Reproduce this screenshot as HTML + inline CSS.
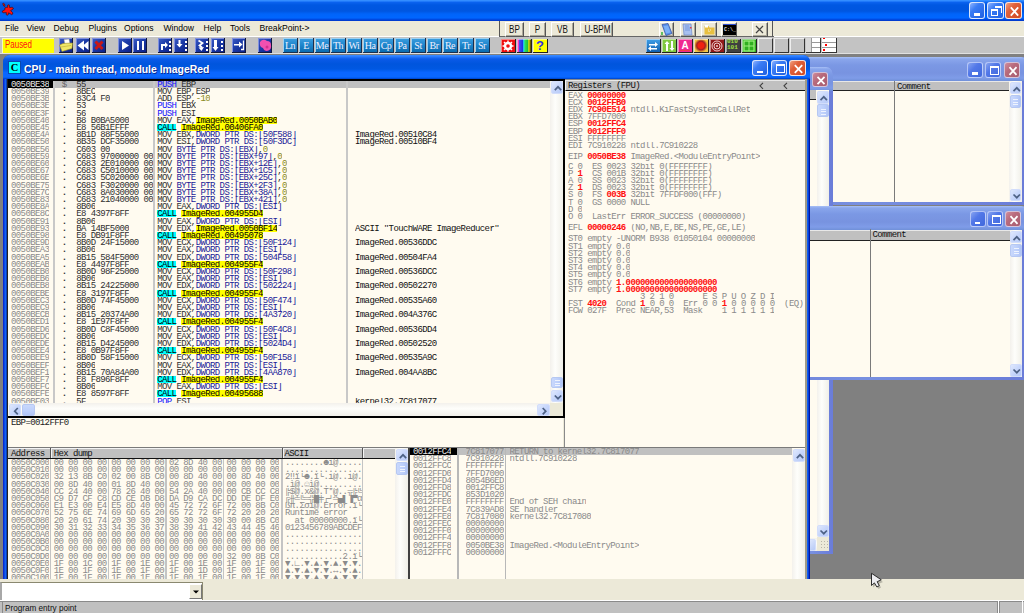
<!DOCTYPE html><html><head><meta charset="utf-8"><style>
*{margin:0;padding:0;box-sizing:border-box}
html,body{width:1024px;height:613px;overflow:hidden;background:#808080}
div{position:absolute}
.t{white-space:pre;line-height:7.2px;font-family:"Liberation Mono",monospace;font-size:9px;letter-spacing:-0.6px;margin-top:1.2px}
.r{position:absolute;white-space:pre;height:8.6px;overflow:hidden;line-height:7.2px;font-family:"Liberation Mono",monospace;font-size:9px;letter-spacing:-0.6px;padding-top:1.2px}
</style></head><body>
<div style="position:absolute;left:0px;top:0px;width:1024px;height:21px;background:linear-gradient(#3c96ff 0px,#2a84ff 1px,#0a62ee 2.5px,#0058e2 5px,#0056e0 11px,#0064fa 14px,#0066ff 18px,#0050e8 19px,#003cd0 20.5px,#0038c8 21px)"></div>
<svg style="position:absolute;left:0;top:0" width="18" height="18" viewBox="0 0 18 18"><g fill="#ff1010" stroke="#300808" stroke-width="0.6" stroke-linejoin="round"><path d="M2.7 3.6 Q3.8 2.8 4.6 4 L5 6.2 Q4.2 6.8 3.6 6 Z"/><path d="M7.6 5.2 Q8.2 4.4 9.3 5 L9.6 7.6 L12.2 7.2 Q13.8 7.8 13.2 9 L10.6 10.6 L12.6 12.6 Q13.3 14.3 11.8 14.8 L8.6 12.8 L8.2 14.8 Q7 15.8 6.2 14.6 L6.4 12.6 L3 12.8 Q1.8 12.2 2.4 11 L5 9.6 L4.8 8 Q6 7 7.6 7.4 Z"/></g></svg>
<div style="position:absolute;left:969px;top:2px;width:16px;height:17px;background:linear-gradient(135deg,#8fb4ff 0%,#3a7cf5 35%,#1f5fe0 100%);border:1px solid rgba(255,255,255,0.82);border-radius:3px;overflow:hidden"><div style="left:4.0px;top:10.2px;width:5.8px;height:2.5px;background:#fff"></div></div>
<div style="position:absolute;left:987px;top:2px;width:17px;height:17px;background:linear-gradient(135deg,#8fb4ff 0%,#3a7cf5 35%,#1f5fe0 100%);border:1px solid rgba(255,255,255,0.82);border-radius:3px;overflow:hidden"><div style="left:7.1px;top:3.1px;width:6.5px;height:6.5px;border-top:2px solid #fff;border-right:1px solid #fff"></div><div style="left:3.4px;top:6.1px;width:6.8px;height:7.1px;border:1px solid #fff;border-top-width:2px"></div></div>
<div style="position:absolute;left:1005px;top:2px;width:17px;height:17px;background:linear-gradient(135deg,#f0a080 0%,#e0603a 35%,#d04a22 100%);border:1px solid rgba(255,255,255,0.82);border-radius:3px;overflow:hidden"><svg style="position:absolute;left:0;top:0" width="17" height="17" viewBox="0 0 17 17"><path d="M4.8 4.4L12.2 12.6M12.2 4.4L4.8 12.6" stroke="#fff" stroke-width="1.8"/></svg></div>
<div style="position:absolute;left:0px;top:21px;width:1024px;height:16px;background:#ece9d8"></div>
<div style="left:5px;top:23.3px;font:8.6px 'Liberation Sans', sans-serif;color:#000;white-space:pre;line-height:10px">File</div>
<div style="left:26.5px;top:23.3px;font:8.6px 'Liberation Sans', sans-serif;color:#000;white-space:pre;line-height:10px">View</div>
<div style="left:53.5px;top:23.3px;font:8.6px 'Liberation Sans', sans-serif;color:#000;white-space:pre;line-height:10px">Debug</div>
<div style="left:88.5px;top:23.3px;font:8.6px 'Liberation Sans', sans-serif;color:#000;white-space:pre;line-height:10px">Plugins</div>
<div style="left:124px;top:23.3px;font:8.6px 'Liberation Sans', sans-serif;color:#000;white-space:pre;line-height:10px">Options</div>
<div style="left:163.5px;top:23.3px;font:8.6px 'Liberation Sans', sans-serif;color:#000;white-space:pre;line-height:10px">Window</div>
<div style="left:203.5px;top:23.3px;font:8.6px 'Liberation Sans', sans-serif;color:#000;white-space:pre;line-height:10px">Help</div>
<div style="left:230px;top:23.3px;font:8.6px 'Liberation Sans', sans-serif;color:#000;white-space:pre;line-height:10px">Tools</div>
<div style="left:259.5px;top:23.3px;font:8.6px 'Liberation Sans', sans-serif;color:#000;white-space:pre;line-height:10px">BreakPoint-&gt;</div>
<div style="position:absolute;left:499px;top:21px;width:275px;height:16px;border-left:1px solid #555;border-bottom:1px solid #666;background:#ece9d8"></div>
<div style="position:absolute;left:505px;top:22px;width:19px;height:15px;background:#ece9d8;border-left:1px solid #fff;border-top:1px solid #fff;border-right:1px solid #555;border-bottom:1px solid #555;box-shadow:inset -1px -1px 0 #aca899"><div style="left:0;top:1px;width:17px;text-align:center;font:10.4px 'Liberation Sans', sans-serif;color:#111;line-height:12px;transform:scaleX(0.78);white-space:pre">BP</div></div>
<div style="position:absolute;left:529px;top:22px;width:17px;height:15px;background:#ece9d8;border-left:1px solid #fff;border-top:1px solid #fff;border-right:1px solid #555;border-bottom:1px solid #555;box-shadow:inset -1px -1px 0 #aca899"><div style="left:0;top:1px;width:15px;text-align:center;font:10.4px 'Liberation Sans', sans-serif;color:#111;line-height:12px;transform:scaleX(0.78);white-space:pre">P</div></div>
<div style="position:absolute;left:551px;top:22px;width:23px;height:15px;background:#ece9d8;border-left:1px solid #fff;border-top:1px solid #fff;border-right:1px solid #555;border-bottom:1px solid #555;box-shadow:inset -1px -1px 0 #aca899"><div style="left:0;top:1px;width:21px;text-align:center;font:10.4px 'Liberation Sans', sans-serif;color:#111;line-height:12px;transform:scaleX(0.78);white-space:pre">VB</div></div>
<div style="position:absolute;left:580px;top:22px;width:33px;height:15px;background:#ece9d8;border-left:1px solid #fff;border-top:1px solid #fff;border-right:1px solid #555;border-bottom:1px solid #555;box-shadow:inset -1px -1px 0 #aca899"><div style="left:0;top:1px;width:31px;text-align:center;font:10.4px 'Liberation Sans', sans-serif;color:#111;line-height:12px;transform:scaleX(0.78);white-space:pre">U-BPM</div></div>
<div style="position:absolute;left:658.5px;top:22px;width:15.5px;height:15px;background:#ece9d8;border-left:1px solid #fff;border-top:1px solid #fff;border-right:1px solid #555;border-bottom:1px solid #555;box-shadow:inset -1px -1px 0 #aca899"></div>
<div style="position:absolute;left:679.5px;top:22px;width:16px;height:15px;background:#ece9d8;border-left:1px solid #fff;border-top:1px solid #fff;border-right:1px solid #555;border-bottom:1px solid #555;box-shadow:inset -1px -1px 0 #aca899"></div>
<div style="position:absolute;left:701px;top:22px;width:16px;height:15px;background:#ece9d8;border-left:1px solid #fff;border-top:1px solid #fff;border-right:1px solid #555;border-bottom:1px solid #555;box-shadow:inset -1px -1px 0 #aca899"></div>
<div style="position:absolute;left:721px;top:22px;width:15.5px;height:15px;background:#ece9d8;border-left:1px solid #fff;border-top:1px solid #fff;border-right:1px solid #555;border-bottom:1px solid #555;box-shadow:inset -1px -1px 0 #aca899"></div>
<svg style="position:absolute;left:660px;top:23px" width="14" height="13"><path d="M2 1.5L8 0.5L12 10.5L6 12.5Z" fill="#5a8ee8" stroke="#3a5aa8" stroke-width="0.8"/><path d="M3.5 3L8 2.5L10.5 9.5L6 10.5Z" fill="#7ab0f8"/><rect x="1" y="9" width="2" height="3" fill="#60c060"/></svg>
<svg style="position:absolute;left:681px;top:23px" width="13" height="13"><path d="M2 1L10 1L11 12L3 12Z" fill="#a8c0f0" stroke="#7890c8" stroke-width="0.8"/><path d="M4 3h4M4 5h5M4 7h5" stroke="#6a90d8" stroke-width="0.8"/><rect x="9" y="4" width="1.5" height="1.5" fill="#e04040"/></svg>
<svg style="position:absolute;left:703px;top:23px" width="13" height="13"><path d="M1.5 3h4l1 1.5h5v7h-10z" fill="#e8c040"/><rect x="2" y="2" width="3" height="2.5" fill="#fff"/><path d="M5 7h1M7 7h1M6 8v1" stroke="#fff" stroke-width="0.8"/></svg>
<div style="position:absolute;left:722.5px;top:23.5px;width:13px;height:11.5px;background:#000;border-top:1.5px solid #3050d0"><div style="left:1.5px;top:2px;font:bold 5px 'Liberation Mono', monospace;color:#ddd;line-height:6px;white-space:pre">C:\_</div></div>
<div style="position:absolute;left:752px;top:22px;width:16px;height:15px;background:#ece9d8;border-left:1px solid #fff;border-top:1px solid #fff;border-right:1px solid #555;border-bottom:1px solid #555;box-shadow:inset -1px -1px 0 #aca899"></div>
<svg style="position:absolute;left:752px;top:22px" width="16" height="15"><path d="M4 4L11 11M11 4L4 11" stroke="#444" stroke-width="1.2"/></svg>
<div style="position:absolute;left:772px;top:21px;width:1px;height:16px;background:#555"></div>
<div style="position:absolute;left:0px;top:37px;width:1024px;height:17px;background:#c3c3c3"></div>
<div style="position:absolute;left:0px;top:36px;width:499px;height:1px;background:#fff"></div>
<div style="position:absolute;left:774px;top:36px;width:250px;height:1px;background:#fff"></div>
<div style="position:absolute;left:0px;top:53px;width:1024px;height:1px;background:#e0e0e0"></div>
<div style="position:absolute;left:1.5px;top:37.5px;width:52.5px;height:15.5px;background:#ffff00;border-top:1px solid #f8f8c0;border-left:1px solid #f8f8c0"></div>
<div style="left:4.5px;top:39.4px;font:10.2px 'Liberation Sans', sans-serif;color:#ff1010;line-height:12px;white-space:pre;transform:scaleX(0.78);transform-origin:0 0">Paused</div>
<div style="position:absolute;left:59px;top:38.3px;width:14px;height:14.5px;background:linear-gradient(135deg,#4060c8 0%,#1c3ca8 45%,#0c2088 100%);border-right:1px solid #101840;border-bottom:1px solid #101840;box-shadow:inset 1px 1px 0 #8090e0"><svg style="position:absolute;left:0;top:0" width="15" height="15"><path d="M5 1.5 L10 1 L11 6 L6 7 Z" fill="#fff" stroke="#999" stroke-width="0.5"/><path d="M0.5 7 L4 5.5 L13.5 5 L13 10.5 L3 13.5 Z" fill="#f0e868" stroke="#a09020" stroke-width="0.6"/><path d="M2 9 L12 7.5" stroke="#c8b840" stroke-width="0.8"/></svg></div>
<div style="position:absolute;left:75.5px;top:38.3px;width:14px;height:14.5px;background:linear-gradient(135deg,#4060c8 0%,#1c3ca8 45%,#0c2088 100%);border-right:1px solid #101840;border-bottom:1px solid #101840;box-shadow:inset 1px 1px 0 #8090e0"><svg style="position:absolute;left:0;top:0" width="15" height="15"><path d="M1.5 7.5L8 2.5V12.5Z M7 7.5L12.5 3V12Z" fill="#fff"/></svg></div>
<div style="position:absolute;left:91.5px;top:38.3px;width:14px;height:14.5px;background:linear-gradient(135deg,#4060c8 0%,#1c3ca8 45%,#0c2088 100%);border-right:1px solid #101840;border-bottom:1px solid #101840;box-shadow:inset 1px 1px 0 #8090e0"><svg style="position:absolute;left:0;top:0" width="15" height="15"><path d="M3.5 3.5L10.5 11M10.5 3.5L3.5 11" stroke="#c81818" stroke-width="3"/></svg></div>
<div style="position:absolute;left:117.5px;top:38.3px;width:14px;height:14.5px;background:linear-gradient(135deg,#4060c8 0%,#1c3ca8 45%,#0c2088 100%);border-right:1px solid #101840;border-bottom:1px solid #101840;box-shadow:inset 1px 1px 0 #8090e0"><svg style="position:absolute;left:0;top:0" width="15" height="15"><path d="M4 3L11 7.5L4 12Z" fill="#fff"/></svg></div>
<div style="position:absolute;left:133px;top:38.3px;width:14px;height:14.5px;background:linear-gradient(135deg,#4060c8 0%,#1c3ca8 45%,#0c2088 100%);border-right:1px solid #101840;border-bottom:1px solid #101840;box-shadow:inset 1px 1px 0 #8090e0"><svg style="position:absolute;left:0;top:0" width="15" height="15"><rect x="4" y="3" width="2" height="9" fill="#fff"/><rect x="9" y="3" width="2" height="9" fill="#fff"/></svg></div>
<div style="position:absolute;left:158px;top:38.3px;width:14px;height:14.5px;background:linear-gradient(135deg,#4060c8 0%,#1c3ca8 45%,#0c2088 100%);border-right:1px solid #101840;border-bottom:1px solid #101840;box-shadow:inset 1px 1px 0 #8090e0"><svg style="position:absolute;left:0;top:0" width="15" height="15"><path d="M3 12V6h4V4l3 3-3 3V8H5v4z" fill="#fff"/><rect x="11" y="3" width="2" height="2" fill="#fff"/><rect x="11" y="7" width="2" height="2" fill="#fff"/><rect x="11" y="11" width="2" height="2" fill="#fff"/></svg></div>
<div style="position:absolute;left:174px;top:38.3px;width:14px;height:14.5px;background:linear-gradient(135deg,#4060c8 0%,#1c3ca8 45%,#0c2088 100%);border-right:1px solid #101840;border-bottom:1px solid #101840;box-shadow:inset 1px 1px 0 #8090e0"><svg style="position:absolute;left:0;top:0" width="15" height="15"><path d="M4.5 2v4H2.5l3 3.5 3-3.5H6.5V2z" fill="#fff"/><rect x="11" y="3" width="2" height="2" fill="#fff"/><rect x="11" y="7" width="2" height="2" fill="#fff"/><rect x="11" y="11" width="2" height="2" fill="#fff"/></svg></div>
<div style="position:absolute;left:195px;top:38.3px;width:14px;height:14.5px;background:linear-gradient(135deg,#4060c8 0%,#1c3ca8 45%,#0c2088 100%);border-right:1px solid #101840;border-bottom:1px solid #101840;box-shadow:inset 1px 1px 0 #8090e0"><svg style="position:absolute;left:0;top:0" width="15" height="15"><path d="M3.5 2.5L7.5 5L4.5 7.5L7 9.5" stroke="#fff" stroke-width="1.8" fill="none" stroke-linejoin="miter"/><path d="M3.5 9.5L6.5 13L9 9Z" fill="#fff"/><rect x="11" y="3" width="2" height="2" fill="#fff"/><rect x="11" y="7" width="2" height="2" fill="#fff"/><rect x="11" y="11" width="2" height="2" fill="#fff"/></svg></div>
<div style="position:absolute;left:211px;top:38.3px;width:14px;height:14.5px;background:linear-gradient(135deg,#4060c8 0%,#1c3ca8 45%,#0c2088 100%);border-right:1px solid #101840;border-bottom:1px solid #101840;box-shadow:inset 1px 1px 0 #8090e0"><svg style="position:absolute;left:0;top:0" width="15" height="15"><path d="M3 2v7H1.5l3 4 3-4H6V2z" fill="#fff"/><rect x="10" y="3" width="2" height="2" fill="#fff"/><rect x="10" y="7" width="2" height="2" fill="#fff"/><rect x="10" y="11" width="2" height="2" fill="#fff"/></svg></div>
<div style="position:absolute;left:232px;top:38.3px;width:14px;height:14.5px;background:linear-gradient(135deg,#4060c8 0%,#1c3ca8 45%,#0c2088 100%);border-right:1px solid #101840;border-bottom:1px solid #101840;box-shadow:inset 1px 1px 0 #8090e0"><svg style="position:absolute;left:0;top:0" width="15" height="15"><path d="M2 6h5V3.5l3.5 3-3.5 3V7.5H2z" fill="#fff"/><path d="M11.5 2.5V11.5H9" stroke="#fff" stroke-width="1.3" fill="none"/></svg></div>
<div style="position:absolute;left:257.5px;top:38.3px;width:14px;height:14.5px;background:linear-gradient(135deg,#4060c8 0%,#1c3ca8 45%,#0c2088 100%);border-right:1px solid #101840;border-bottom:1px solid #101840;box-shadow:inset 1px 1px 0 #8090e0"><svg style="position:absolute;left:0;top:0" width="15" height="15"><path d="M2 4 Q5 0 9 3 Q13 3 13 7 Q14 12 9 13 Q6 13 5 10 Q1 9 2 4Z" fill="#f050b0"/><circle cx="9" cy="9" r="1.5" fill="#d03090"/></svg></div>
<div style="position:absolute;left:283px;top:38px;width:15px;height:15px;background:linear-gradient(#3c9ee0 0%,#1f86cc 50%,#0c6cb0 100%);border-right:1px solid #1a3050;border-bottom:1px solid #1a3050;box-shadow:inset 1px 1px 0 #9fd0f0"><div style="left:0;top:1.5px;width:14px;text-align:center;font:10px 'Liberation Serif',serif;color:#f0f0ff;line-height:12px;white-space:pre;letter-spacing:-0.5px;-webkit-text-stroke:0px #f0f0ff">Ln</div></div>
<div style="position:absolute;left:299px;top:38px;width:15px;height:15px;background:linear-gradient(#3c9ee0 0%,#1f86cc 50%,#0c6cb0 100%);border-right:1px solid #1a3050;border-bottom:1px solid #1a3050;box-shadow:inset 1px 1px 0 #9fd0f0"><div style="left:0;top:1.5px;width:14px;text-align:center;font:10px 'Liberation Serif',serif;color:#f0f0ff;line-height:12px;white-space:pre;letter-spacing:-0.5px;-webkit-text-stroke:0px #f0f0ff">E</div></div>
<div style="position:absolute;left:315px;top:38px;width:15px;height:15px;background:linear-gradient(#3c9ee0 0%,#1f86cc 50%,#0c6cb0 100%);border-right:1px solid #1a3050;border-bottom:1px solid #1a3050;box-shadow:inset 1px 1px 0 #9fd0f0"><div style="left:0;top:1.5px;width:14px;text-align:center;font:10px 'Liberation Serif',serif;color:#f0f0ff;line-height:12px;white-space:pre;letter-spacing:-0.5px;-webkit-text-stroke:0px #f0f0ff">Me</div></div>
<div style="position:absolute;left:331px;top:38px;width:15px;height:15px;background:linear-gradient(#3c9ee0 0%,#1f86cc 50%,#0c6cb0 100%);border-right:1px solid #1a3050;border-bottom:1px solid #1a3050;box-shadow:inset 1px 1px 0 #9fd0f0"><div style="left:0;top:1.5px;width:14px;text-align:center;font:10px 'Liberation Serif',serif;color:#f0f0ff;line-height:12px;white-space:pre;letter-spacing:-0.5px;-webkit-text-stroke:0px #f0f0ff">Th</div></div>
<div style="position:absolute;left:347px;top:38px;width:15px;height:15px;background:linear-gradient(#3c9ee0 0%,#1f86cc 50%,#0c6cb0 100%);border-right:1px solid #1a3050;border-bottom:1px solid #1a3050;box-shadow:inset 1px 1px 0 #9fd0f0"><div style="left:0;top:1.5px;width:14px;text-align:center;font:10px 'Liberation Serif',serif;color:#f0f0ff;line-height:12px;white-space:pre;letter-spacing:-0.5px;-webkit-text-stroke:0px #f0f0ff">Wi</div></div>
<div style="position:absolute;left:363px;top:38px;width:15px;height:15px;background:linear-gradient(#3c9ee0 0%,#1f86cc 50%,#0c6cb0 100%);border-right:1px solid #1a3050;border-bottom:1px solid #1a3050;box-shadow:inset 1px 1px 0 #9fd0f0"><div style="left:0;top:1.5px;width:14px;text-align:center;font:10px 'Liberation Serif',serif;color:#f0f0ff;line-height:12px;white-space:pre;letter-spacing:-0.5px;-webkit-text-stroke:0px #f0f0ff">Ha</div></div>
<div style="position:absolute;left:379px;top:38px;width:15px;height:15px;background:linear-gradient(#3c9ee0 0%,#1f86cc 50%,#0c6cb0 100%);border-right:1px solid #1a3050;border-bottom:1px solid #1a3050;box-shadow:inset 1px 1px 0 #9fd0f0"><div style="left:0;top:1.5px;width:14px;text-align:center;font:10px 'Liberation Serif',serif;color:#f0f0ff;line-height:12px;white-space:pre;letter-spacing:-0.5px;-webkit-text-stroke:0px #f0f0ff">Cp</div></div>
<div style="position:absolute;left:395px;top:38px;width:15px;height:15px;background:linear-gradient(#3c9ee0 0%,#1f86cc 50%,#0c6cb0 100%);border-right:1px solid #1a3050;border-bottom:1px solid #1a3050;box-shadow:inset 1px 1px 0 #9fd0f0"><div style="left:0;top:1.5px;width:14px;text-align:center;font:10px 'Liberation Serif',serif;color:#f0f0ff;line-height:12px;white-space:pre;letter-spacing:-0.5px;-webkit-text-stroke:0px #f0f0ff">Pa</div></div>
<div style="position:absolute;left:411px;top:38px;width:15px;height:15px;background:linear-gradient(#3c9ee0 0%,#1f86cc 50%,#0c6cb0 100%);border-right:1px solid #1a3050;border-bottom:1px solid #1a3050;box-shadow:inset 1px 1px 0 #9fd0f0"><div style="left:0;top:1.5px;width:14px;text-align:center;font:10px 'Liberation Serif',serif;color:#f0f0ff;line-height:12px;white-space:pre;letter-spacing:-0.5px;-webkit-text-stroke:0px #f0f0ff">St</div></div>
<div style="position:absolute;left:427px;top:38px;width:15px;height:15px;background:linear-gradient(#3c9ee0 0%,#1f86cc 50%,#0c6cb0 100%);border-right:1px solid #1a3050;border-bottom:1px solid #1a3050;box-shadow:inset 1px 1px 0 #9fd0f0"><div style="left:0;top:1.5px;width:14px;text-align:center;font:10px 'Liberation Serif',serif;color:#f0f0ff;line-height:12px;white-space:pre;letter-spacing:-0.5px;-webkit-text-stroke:0px #f0f0ff">Br</div></div>
<div style="position:absolute;left:443px;top:38px;width:15px;height:15px;background:linear-gradient(#3c9ee0 0%,#1f86cc 50%,#0c6cb0 100%);border-right:1px solid #1a3050;border-bottom:1px solid #1a3050;box-shadow:inset 1px 1px 0 #9fd0f0"><div style="left:0;top:1.5px;width:14px;text-align:center;font:10px 'Liberation Serif',serif;color:#f0f0ff;line-height:12px;white-space:pre;letter-spacing:-0.5px;-webkit-text-stroke:0px #f0f0ff">Re</div></div>
<div style="position:absolute;left:459px;top:38px;width:15px;height:15px;background:linear-gradient(#3c9ee0 0%,#1f86cc 50%,#0c6cb0 100%);border-right:1px solid #1a3050;border-bottom:1px solid #1a3050;box-shadow:inset 1px 1px 0 #9fd0f0"><div style="left:0;top:1.5px;width:14px;text-align:center;font:10px 'Liberation Serif',serif;color:#f0f0ff;line-height:12px;white-space:pre;letter-spacing:-0.5px;-webkit-text-stroke:0px #f0f0ff">Tr</div></div>
<div style="position:absolute;left:475px;top:38px;width:15px;height:15px;background:linear-gradient(#3c9ee0 0%,#1f86cc 50%,#0c6cb0 100%);border-right:1px solid #1a3050;border-bottom:1px solid #1a3050;box-shadow:inset 1px 1px 0 #9fd0f0"><div style="left:0;top:1.5px;width:14px;text-align:center;font:10px 'Liberation Serif',serif;color:#f0f0ff;line-height:12px;white-space:pre;letter-spacing:-0.5px;-webkit-text-stroke:0px #f0f0ff">Sr</div></div>
<div style="position:absolute;left:501px;top:38.5px;width:14.5px;height:14.5px;background:#f01010;border-right:1px solid #222;border-bottom:1px solid #222;box-shadow:inset 1px 1px 0 rgba(255,255,255,0.5)"><svg style="position:absolute;left:0;top:0" width="14" height="14"><circle cx="7" cy="7" r="4.2" fill="#fff"/><circle cx="7" cy="7" r="1.8" fill="#f01010"/><path d="M7 1.5v11M1.5 7h11M3 3l8 8M11 3l-8 8" stroke="#fff" stroke-width="1.4"/><circle cx="7" cy="7" r="1.8" fill="#f01010"/></svg></div>
<div style="position:absolute;left:517px;top:38.5px;width:14.5px;height:14.5px;background:linear-gradient(90deg,#f040c0 0%,#f040c0 12%,#4050f0 18%,#2030e0 40%,#20e0f0 48%,#30e050 58%,#20c040 75%,#f0e000 85%,#403000 100%);border-right:1px solid #222;border-bottom:1px solid #222;box-shadow:inset 1px 1px 0 rgba(255,255,255,0.5)"></div>
<div style="position:absolute;left:533px;top:38.5px;width:14.5px;height:14.5px;background:#ffff00;border-right:1px solid #222;border-bottom:1px solid #222;box-shadow:inset 1px 1px 0 rgba(255,255,255,0.5)"><div style="left:1px;top:-1px;width:12px;text-align:center;font:bold 13px 'Liberation Sans', sans-serif;color:#3030e0;line-height:15px">?</div></div>
<div style="position:absolute;left:646px;top:38.5px;width:14.5px;height:14.5px;background:linear-gradient(#40a0e8,#1060b0);border-right:1px solid #222;border-bottom:1px solid #222;box-shadow:inset 1px 1px 0 rgba(255,255,255,0.5)"><svg style="position:absolute;left:0;top:0" width="14" height="14"><path d="M3 5h6V3l3 2.5-3 2.5V6.5H3z M11 9H5V7L2 9.5 5 12v-1.5h6z" fill="#fff"/></svg></div>
<div style="position:absolute;left:662px;top:38.5px;width:14.5px;height:14.5px;background:#80c840;border-right:1px solid #222;border-bottom:1px solid #222;box-shadow:inset 1px 1px 0 rgba(255,255,255,0.5)"><svg style="position:absolute;left:0;top:0" width="14" height="14"><path d="M4 12V5H2.5L5 2l2.5 3H6v7z M9 2v7H7.5l2.5 3 2.5-3H11V2z" fill="#fff"/></svg></div>
<div style="position:absolute;left:678px;top:38.5px;width:14.5px;height:14.5px;background:#f02890;border-right:1px solid #222;border-bottom:1px solid #222;box-shadow:inset 1px 1px 0 rgba(255,255,255,0.5)"><div style="left:0;top:1px;width:14px;text-align:center;font:bold 10px 'Liberation Sans', sans-serif;color:#fff;line-height:12px">A</div><div style="left:2px;top:11px;width:10px;height:1px;background:#f04040"></div></div>
<div style="position:absolute;left:694px;top:38.5px;width:14.5px;height:14.5px;background:radial-gradient(circle,#f02010 0%,#f02010 30%,#a02020 45%,#f0c040 70%,#f0d050 100%);border-right:1px solid #222;border-bottom:1px solid #222;box-shadow:inset 1px 1px 0 rgba(255,255,255,0.5)"></div>
<div style="position:absolute;left:710px;top:38.5px;width:14.5px;height:14.5px;background:#901818;border-right:1px solid #222;border-bottom:1px solid #222;box-shadow:inset 1px 1px 0 rgba(255,255,255,0.5)"><svg style="position:absolute;left:0;top:0" width="14" height="14"><circle cx="7" cy="7" r="5" fill="none" stroke="#f0d0d0" stroke-width="1"/><circle cx="7" cy="7" r="3" fill="none" stroke="#f0d0d0" stroke-width="1"/><circle cx="7" cy="7" r="1" fill="#f0d0d0"/></svg></div>
<div style="position:absolute;left:726px;top:38.5px;width:14.5px;height:14.5px;background:#404040;border-right:1px solid #222;border-bottom:1px solid #222;box-shadow:inset 1px 1px 0 rgba(255,255,255,0.5)"><div style="left:1px;top:0px;font:bold 6px 'Liberation Mono', monospace;color:#a0e040;line-height:6px;white-space:pre">010
101</div></div>
<div style="position:absolute;left:742px;top:38.5px;width:14.5px;height:14.5px;background:#30b020;border-right:1px solid #222;border-bottom:1px solid #222;box-shadow:inset 1px 1px 0 rgba(255,255,255,0.5)"><svg style="position:absolute;left:0;top:0" width="14" height="14"><rect x="2" y="2" width="10" height="10" fill="none" stroke="#a0f080" stroke-width="1.2"/><path d="M7 2v10M2 7h10" stroke="#a0f080"/></svg></div>
<div style="position:absolute;left:758px;top:38px;width:15px;height:15px;background:#c3c3c3;border-left:1px solid #eee;border-top:1px solid #eee;border-right:1px solid #333;border-bottom:1px solid #333"></div>
<div style="position:absolute;left:774px;top:38px;width:15px;height:15px;background:#c3c3c3;border-left:1px solid #eee;border-top:1px solid #eee;border-right:1px solid #333;border-bottom:1px solid #333"></div>
<div style="position:absolute;left:790px;top:38px;width:15px;height:15px;background:#c3c3c3;border-left:1px solid #eee;border-top:1px solid #eee;border-right:1px solid #333;border-bottom:1px solid #333"></div>
<div style="position:absolute;left:806px;top:38px;width:15px;height:15px;background:#fff;border-right:1px solid #333;border-bottom:1px solid #333"><div style="left:0;top:0;width:5px;height:14px;background:#d8d8d8"></div><div style="left:5px;top:4px;width:9px;height:1px;background:#999"></div><div style="left:5px;top:9px;width:9px;height:1px;background:#999"></div><div style="left:5px;top:0;width:1px;height:14px;background:#999"></div></div>
<div style="position:absolute;left:822px;top:38px;width:15px;height:15px;background:#fff;border-right:1px solid #333;border-bottom:1px solid #333"><div style="left:0;top:4px;width:14px;height:1px;background:#999"></div><div style="left:0;top:9px;width:14px;height:1px;background:#999"></div><div style="left:1px;top:0;width:2px;height:1px;background:#f00"></div><div style="left:3px;top:6px;width:2px;height:2px;background:#f00"></div><div style="left:1px;top:11px;width:2px;height:2px;background:#f00"></div></div>
<div style="position:absolute;left:0px;top:54px;width:1024px;height:525px;background:#808080"></div>
<div style="position:absolute;left:700px;top:56.5px;width:328px;height:148.5px;background:linear-gradient(90deg,#6a7cd8,#7890e0 50%,#6a7cd8);border-radius:7px 7px 0 0;overflow:hidden"><div style="left:0;top:0;width:328px;height:24px;background:linear-gradient(#a8c0f6 0px,#8aa6ec 2px,#7b98e4 8px,#7893e0 16px,#7f9ce8 21px,#7090d8 24px)"></div></div>
<div style="position:absolute;left:704px;top:81px;width:317.5px;height:120.5px;background:#fffbf0"></div>
<div style="position:absolute;left:704px;top:81px;width:305px;height:10px;background:#c0c0c0;border-bottom:1px solid #222;border-top:1px solid #e8e8e8"></div>
<div style="position:absolute;left:894px;top:81px;width:1px;height:120.5px;background:#7a7a7a"></div>
<div class="t" style="left:897px;top:82.5px;color:#111;">Comment</div>
<div style="position:absolute;left:1009px;top:81px;width:12.5px;height:120.5px;background:linear-gradient(90deg,#f3f1ec 0%,#fefefb 40%,#f0efe8 100%);overflow:hidden"><div style="left:0.5px;top:0.5px;width:11.5px;height:12.5px;background:linear-gradient(135deg,#dfe8fd 0%,#c7d6fb 50%,#b7caf7 100%);border:1px solid #d2ddfb;border-radius:2px"><svg style="position:absolute;left:0;top:0" width="11.5" height="12.5"><path d="M2.5 8.1L5.8 4.8L8.9 8.1" stroke="#4d6185" stroke-width="1.7" fill="none"/></svg></div><div style="left:0.5px;top:107.5px;width:11.5px;height:12.5px;background:linear-gradient(135deg,#dfe8fd 0%,#c7d6fb 50%,#b7caf7 100%);border:1px solid #d2ddfb;border-radius:2px"><svg style="position:absolute;left:0;top:0" width="11.5" height="12.5"><path d="M2.5 4.5L5.8 7.7L8.9 4.5" stroke="#4d6185" stroke-width="1.7" fill="none"/></svg></div><div style="left:0.5px;top:13.5px;width:11.5px;height:13px;background:linear-gradient(90deg,#c9d8fc,#bccffb 60%,#b0c4f5);border:1px solid #b6c8f2;border-radius:2px"><div style="left:2.8px;top:3.5px;width:5px;height:6px;border-top:1px solid #eef3fe;border-bottom:1px solid #eef3fe;"><div style="left:0;top:1.5px;width:5px;height:1px;background:#eef3fe"></div></div></div></div>
<div style="position:absolute;left:967px;top:61.5px;width:16px;height:16px;background:linear-gradient(135deg,#88a4f0 0%,#5278e8 40%,#4068dc 100%);border:1px solid rgba(225,232,255,0.7);border-radius:3px;overflow:hidden"><div style="left:4.0px;top:9.6px;width:5.8px;height:2.5px;background:#fff"></div></div>
<div style="position:absolute;left:985px;top:61.5px;width:16px;height:16px;background:linear-gradient(135deg,#88a4f0 0%,#5278e8 40%,#4068dc 100%);border:1px solid rgba(225,232,255,0.7);border-radius:3px;overflow:hidden"><div style="left:3.5px;top:3.2px;width:9.0px;height:9.0px;border:1px solid #fff;border-top-width:2px"></div></div>
<div style="position:absolute;left:1003.5px;top:61.5px;width:16px;height:16px;background:linear-gradient(135deg,#d08c9c 0%,#b86a7c 40%,#a85c70 100%);border:1px solid rgba(225,232,255,0.7);border-radius:3px;overflow:hidden"><svg style="position:absolute;left:0;top:0" width="16" height="16" viewBox="0 0 16 16"><path d="M4.5 4.2L11.5 11.8M11.5 4.2L4.5 11.8" stroke="#fff" stroke-width="1.8"/></svg></div>
<div style="position:absolute;left:790px;top:66.5px;width:43px;height:487.5px;background:linear-gradient(90deg,#6a7cd8,#7890e0 50%,#6a7cd8);border-radius:7px 7px 0 0;overflow:hidden"><div style="left:0;top:0;width:43px;height:24px;background:linear-gradient(#a8c0f6 0px,#8aa6ec 2px,#7b98e4 8px,#7893e0 16px,#7f9ce8 21px,#7090d8 24px)"></div></div>
<div style="position:absolute;left:794px;top:90px;width:35px;height:461px;background:#fffbf0"></div>
<div style="position:absolute;left:794px;top:90px;width:22px;height:10px;background:#c0c0c0;border-bottom:1px solid #222"></div>
<div style="position:absolute;left:816.5px;top:90.5px;width:12.5px;height:447px;background:linear-gradient(90deg,#f3f1ec 0%,#fefefb 40%,#f0efe8 100%);overflow:hidden"><div style="left:0.5px;top:0.5px;width:11.5px;height:12.5px;background:linear-gradient(135deg,#dfe8fd 0%,#c7d6fb 50%,#b7caf7 100%);border:1px solid #d2ddfb;border-radius:2px"><svg style="position:absolute;left:0;top:0" width="11.5" height="12.5"><path d="M2.5 8.1L5.8 4.8L8.9 8.1" stroke="#4d6185" stroke-width="1.7" fill="none"/></svg></div><div style="left:0.5px;top:434.0px;width:11.5px;height:12.5px;background:linear-gradient(135deg,#dfe8fd 0%,#c7d6fb 50%,#b7caf7 100%);border:1px solid #d2ddfb;border-radius:2px"><svg style="position:absolute;left:0;top:0" width="11.5" height="12.5"><path d="M2.5 4.5L5.8 7.7L8.9 4.5" stroke="#4d6185" stroke-width="1.7" fill="none"/></svg></div><div style="left:0.5px;top:13.5px;width:11.5px;height:13px;background:linear-gradient(90deg,#c9d8fc,#bccffb 60%,#b0c4f5);border:1px solid #b6c8f2;border-radius:2px"><div style="left:2.8px;top:3.5px;width:5px;height:6px;border-top:1px solid #eef3fe;border-bottom:1px solid #eef3fe;"><div style="left:0;top:1.5px;width:5px;height:1px;background:#eef3fe"></div></div></div></div>
<div style="position:absolute;left:816.5px;top:537px;width:12.5px;height:14px;background:#ece9d8"><div style="left:3px;top:3px;width:8px;height:8px;background:radial-gradient(circle,#b8b4a8 0.8px,transparent 1px) 0 0/3px 3px"></div></div>
<div style="position:absolute;left:794px;top:538px;width:22.5px;height:13px;background:linear-gradient(#f3f1ec,#fefefb 40%,#f0efe8)"><div style="left:14px;top:0.5px;width:8px;height:12px;background:linear-gradient(135deg,#dfe8fd,#b7caf7);border:1px solid #d2ddfb;border-radius:2px"></div></div>
<div style="position:absolute;left:812px;top:72px;width:16px;height:15px;background:linear-gradient(135deg,#d08c9c 0%,#b86a7c 40%,#a85c70 100%);border:1px solid rgba(225,232,255,0.7);border-radius:3px;overflow:hidden"><svg style="position:absolute;left:0;top:0" width="16" height="15" viewBox="0 0 16 15"><path d="M4.5 3.9L11.5 11.1M11.5 3.9L4.5 11.1" stroke="#fff" stroke-width="1.8"/></svg></div>
<div style="position:absolute;left:700px;top:205.5px;width:328px;height:174px;background:linear-gradient(90deg,#6a7cd8,#7890e0 50%,#6a7cd8);border-radius:7px 7px 0 0;overflow:hidden"><div style="left:0;top:0;width:328px;height:24px;background:linear-gradient(#a8c0f6 0px,#8aa6ec 2px,#7b98e4 8px,#7893e0 16px,#7f9ce8 21px,#7090d8 24px)"></div></div>
<div style="position:absolute;left:704px;top:229.5px;width:317.5px;height:147.5px;background:#fffbf0"></div>
<div style="position:absolute;left:704px;top:229.5px;width:306px;height:11px;background:#c0c0c0;border-bottom:1px solid #222;border-top:1px solid #e8e8e8"></div>
<div style="position:absolute;left:869.5px;top:229px;width:1px;height:148px;background:#7a7a7a"></div>
<div class="t" style="left:872.5px;top:230.5px;color:#111;">Comment</div>
<div style="position:absolute;left:1009.5px;top:230px;width:12.5px;height:147px;background:linear-gradient(90deg,#f3f1ec 0%,#fefefb 40%,#f0efe8 100%);overflow:hidden"><div style="left:0.5px;top:0.5px;width:11.5px;height:12.5px;background:linear-gradient(135deg,#dfe8fd 0%,#c7d6fb 50%,#b7caf7 100%);border:1px solid #d2ddfb;border-radius:2px"><svg style="position:absolute;left:0;top:0" width="11.5" height="12.5"><path d="M2.5 8.1L5.8 4.8L8.9 8.1" stroke="#4d6185" stroke-width="1.7" fill="none"/></svg></div><div style="left:0.5px;top:134.0px;width:11.5px;height:12.5px;background:linear-gradient(135deg,#dfe8fd 0%,#c7d6fb 50%,#b7caf7 100%);border:1px solid #d2ddfb;border-radius:2px"><svg style="position:absolute;left:0;top:0" width="11.5" height="12.5"><path d="M2.5 4.5L5.8 7.7L8.9 4.5" stroke="#4d6185" stroke-width="1.7" fill="none"/></svg></div><div style="left:0.5px;top:13.5px;width:11.5px;height:13px;background:linear-gradient(90deg,#c9d8fc,#bccffb 60%,#b0c4f5);border:1px solid #b6c8f2;border-radius:2px"><div style="left:2.8px;top:3.5px;width:5px;height:6px;border-top:1px solid #eef3fe;border-bottom:1px solid #eef3fe;"><div style="left:0;top:1.5px;width:5px;height:1px;background:#eef3fe"></div></div></div></div>
<div style="position:absolute;left:969.5px;top:211px;width:16px;height:16px;background:linear-gradient(135deg,#88a4f0 0%,#5278e8 40%,#4068dc 100%);border:1px solid rgba(225,232,255,0.7);border-radius:3px;overflow:hidden"><div style="left:4.0px;top:9.6px;width:5.8px;height:2.5px;background:#fff"></div></div>
<div style="position:absolute;left:987px;top:211px;width:16px;height:16px;background:linear-gradient(135deg,#88a4f0 0%,#5278e8 40%,#4068dc 100%);border:1px solid rgba(225,232,255,0.7);border-radius:3px;overflow:hidden"><div style="left:3.5px;top:3.2px;width:9.0px;height:9.0px;border:1px solid #fff;border-top-width:2px"></div></div>
<div style="position:absolute;left:1005px;top:211px;width:16px;height:16px;background:linear-gradient(135deg,#d08c9c 0%,#b86a7c 40%,#a85c70 100%);border:1px solid rgba(225,232,255,0.7);border-radius:3px;overflow:hidden"><svg style="position:absolute;left:0;top:0" width="16" height="16" viewBox="0 0 16 16"><path d="M4.5 4.2L11.5 11.8M11.5 4.2L4.5 11.8" stroke="#fff" stroke-width="1.8"/></svg></div>
<div style="position:absolute;left:3px;top:55px;width:807px;height:540px;background:linear-gradient(90deg,#0040d8,#0a5cf2 50%,#0040d8);border-radius:7px 7px 0 0;overflow:hidden"><div style="left:0;top:0;width:807px;height:24px;background:linear-gradient(#3a8cff 0px,#2a7cff 1.5px,#0a5ae8 4px,#0055dd 9px,#0058e2 14px,#0a66ff 17.5px,#0a68ff 22px,#0058ee 23px,#0040c0 24px)"></div></div>
<div style="position:absolute;left:7px;top:79px;width:799px;height:500px;background:#ece9d8"></div>
<div style="position:absolute;left:3px;top:79px;width:4px;height:500px;background:linear-gradient(90deg,#0818c8 0%,#0a48e0 35%,#1464f8 65%,#0a2a90 100%)"></div>
<div style="position:absolute;left:806.5px;top:79px;width:3.5px;height:500px;background:linear-gradient(90deg,#1464f8 0%,#0a50e8 40%,#0018a8 75%,#0010a0 100%)"></div>
<div style="position:absolute;left:8px;top:61px;width:12.5px;height:13px;background:#00ffff;border:1px solid #0a4ab0"><div style="left:0;top:0px;width:11px;text-align:center;font:bold 10.5px 'Liberation Serif',serif;color:#000;line-height:12px">C</div></div>
<div style="left:24px;top:62.5px;font:bold 10.4px 'Liberation Sans', sans-serif;color:#fff;line-height:14px;white-space:pre;text-shadow:1px 1px 0 #0a2a90">CPU - main thread, module ImageRed</div>
<div style="position:absolute;left:752px;top:60px;width:16px;height:16px;background:linear-gradient(135deg,#8fb4ff 0%,#3a7cf5 35%,#1f5fe0 100%);border:1px solid rgba(255,255,255,0.82);border-radius:3px;overflow:hidden"><div style="left:4.0px;top:9.6px;width:5.8px;height:2.5px;background:#fff"></div></div>
<div style="position:absolute;left:771px;top:60px;width:16px;height:16px;background:linear-gradient(135deg,#8fb4ff 0%,#3a7cf5 35%,#1f5fe0 100%);border:1px solid rgba(255,255,255,0.82);border-radius:3px;overflow:hidden"><div style="left:3.5px;top:3.2px;width:9.0px;height:9.0px;border:1px solid #fff;border-top-width:2px"></div></div>
<div style="position:absolute;left:789px;top:60px;width:17px;height:16px;background:linear-gradient(135deg,#f0a080 0%,#e0603a 35%,#d04a22 100%);border:1px solid rgba(255,255,255,0.82);border-radius:3px;overflow:hidden"><svg style="position:absolute;left:0;top:0" width="17" height="16" viewBox="0 0 17 16"><path d="M4.8 4.2L12.2 11.8M12.2 4.2L4.8 11.8" stroke="#fff" stroke-width="1.8"/></svg></div>
<div style="position:absolute;left:7px;top:79px;width:556px;height:339px;background:#fffbf0;border-left:1px solid #404040;border-top:2px solid #000;overflow:hidden"></div>
<div style="position:absolute;left:8px;top:80.7px;width:46px;height:7.2px;background:#000"></div>
<div style="position:absolute;left:54px;top:80.7px;width:496px;height:7.2px;background:#c0c0c0"></div>
<div style="position:absolute;left:52.75px;top:80.7px;width:2px;height:323px;background:#c8c8c8"></div>
<div style="position:absolute;left:153.3px;top:80.7px;width:2px;height:323px;background:#c8c8c8"></div>
<div style="position:absolute;left:345.6px;top:80.7px;width:2px;height:323px;background:#c8c8c8"></div>
<div style="position:absolute;left:195.6px;top:116.7px;width:81.6px;height:7.2px;background:#ffff00"></div>
<div style="position:absolute;left:157.2px;top:123.9px;width:19.2px;height:7.2px;background:#00ffff"></div>
<div style="position:absolute;left:181.2px;top:123.9px;width:81.6px;height:7.2px;background:#ffff00"></div>
<div style="position:absolute;left:157.2px;top:210.3px;width:19.2px;height:7.2px;background:#00ffff"></div>
<div style="position:absolute;left:181.2px;top:210.3px;width:81.6px;height:7.2px;background:#ffff00"></div>
<div style="position:absolute;left:195.6px;top:224.7px;width:81.6px;height:7.2px;background:#ffff00"></div>
<div style="position:absolute;left:157.2px;top:231.9px;width:19.2px;height:7.2px;background:#00ffff"></div>
<div style="position:absolute;left:181.2px;top:231.9px;width:81.6px;height:7.2px;background:#ffff00"></div>
<div style="position:absolute;left:157.2px;top:260.7px;width:19.2px;height:7.2px;background:#00ffff"></div>
<div style="position:absolute;left:181.2px;top:260.7px;width:81.6px;height:7.2px;background:#ffff00"></div>
<div style="position:absolute;left:157.2px;top:289.5px;width:19.2px;height:7.2px;background:#00ffff"></div>
<div style="position:absolute;left:181.2px;top:289.5px;width:81.6px;height:7.2px;background:#ffff00"></div>
<div style="position:absolute;left:157.2px;top:318.3px;width:19.2px;height:7.2px;background:#00ffff"></div>
<div style="position:absolute;left:181.2px;top:318.3px;width:81.6px;height:7.2px;background:#ffff00"></div>
<div style="position:absolute;left:157.2px;top:347.1px;width:19.2px;height:7.2px;background:#00ffff"></div>
<div style="position:absolute;left:181.2px;top:347.1px;width:81.6px;height:7.2px;background:#ffff00"></div>
<div style="position:absolute;left:157.2px;top:375.9px;width:19.2px;height:7.2px;background:#00ffff"></div>
<div style="position:absolute;left:181.2px;top:375.9px;width:81.6px;height:7.2px;background:#ffff00"></div>
<div style="position:absolute;left:157.2px;top:390.3px;width:19.2px;height:7.2px;background:#00ffff"></div>
<div style="position:absolute;left:181.2px;top:390.3px;width:81.6px;height:7.2px;background:#ffff00"></div>
<div style="left:0;top:0;width:1024px;height:403px;overflow:hidden;clip-path:inset(80px 474px 0 8px)"><div class="r" style="left:11px;top:80.70px;color:#e8e8e8">0050BE38</div><div class="r" style="left:57px;top:80.70px;color:#303030"> <span style="color:#666">$</span>  55</div><div class="r" style="left:157.2px;top:80.70px"><span style="color:#1010ff;">PUSH</span> <span style="color:#303030;">EBP</span></div><div class="r" style="left:11px;top:87.90px;color:#8a8a8a">0050BE39</div><div class="r" style="left:57px;top:87.90px;color:#303030"> <b>.</b>  8BEC</div><div class="r" style="left:157.2px;top:87.90px"><span style="color:#303030;">MOV</span> <span style="color:#303030;">EBP</span><span style="color:#303030;">,</span><span style="color:#303030;">ESP</span></div><div class="r" style="left:11px;top:95.10px;color:#8a8a8a">0050BE3B</div><div class="r" style="left:57px;top:95.10px;color:#303030"> <b>.</b>  83C4 F0</div><div class="r" style="left:157.2px;top:95.10px"><span style="color:#303030;">ADD</span> <span style="color:#303030;">ESP</span><span style="color:#303030;">,</span><span style="color:#8a8a20;">-10</span></div><div class="r" style="left:11px;top:102.30px;color:#8a8a8a">0050BE3E</div><div class="r" style="left:57px;top:102.30px;color:#303030"> <b>.</b>  53</div><div class="r" style="left:157.2px;top:102.30px"><span style="color:#1010ff;">PUSH</span> <span style="color:#303030;">EBX</span></div><div class="r" style="left:11px;top:109.50px;color:#8a8a8a">0050BE3F</div><div class="r" style="left:57px;top:109.50px;color:#303030"> <b>.</b>  56</div><div class="r" style="left:157.2px;top:109.50px"><span style="color:#1010ff;">PUSH</span> <span style="color:#303030;">ESI</span></div><div class="r" style="left:11px;top:116.70px;color:#8a8a8a">0050BE40</div><div class="r" style="left:57px;top:116.70px;color:#303030"> <b>.</b>  B8 B0BA5000</div><div class="r" style="left:157.2px;top:116.70px"><span style="color:#303030;">MOV</span> <span style="color:#303030;">EAX</span><span style="color:#303030;">,</span><span style="color:#000;">ImageRed.0050BAB0</span></div><div class="r" style="left:11px;top:123.90px;color:#8a8a8a">0050BE45</div><div class="r" style="left:57px;top:123.90px;color:#303030"> <b>.</b>  E8 56B1EFFF</div><div class="r" style="left:157.2px;top:123.90px"><span style="color:#000;">CALL</span> <span style="color:#000;">ImageRed.00406FA0</span></div><div class="r" style="left:11px;top:131.10px;color:#8a8a8a">0050BE4A</div><div class="r" style="left:57px;top:131.10px;color:#303030"> <b>.</b>  8B1D 88F55000</div><div class="r" style="left:157.2px;top:131.10px"><span style="color:#303030;">MOV</span> <span style="color:#303030;">EBX</span><span style="color:#303030;">,</span><span style="color:#1a1a98;">DWORD PTR DS:[50F588]</span></div><div class="r" style="left:355px;top:131.10px;color:#111">ImageRed.00510C84</div><div class="r" style="left:11px;top:138.30px;color:#8a8a8a">0050BE50</div><div class="r" style="left:57px;top:138.30px;color:#303030"> <b>.</b>  8B35 DCF35000</div><div class="r" style="left:157.2px;top:138.30px"><span style="color:#303030;">MOV</span> <span style="color:#303030;">ESI</span><span style="color:#303030;">,</span><span style="color:#1a1a98;">DWORD PTR DS:[50F3DC]</span></div><div class="r" style="left:355px;top:138.30px;color:#111">ImageRed.00510BF4</div><div class="r" style="left:11px;top:145.50px;color:#8a8a8a">0050BE56</div><div class="r" style="left:57px;top:145.50px;color:#303030"> <b>.</b>  C603 00</div><div class="r" style="left:157.2px;top:145.50px"><span style="color:#303030;">MOV</span> <span style="color:#1a1a98;">BYTE PTR DS:[EBX]</span><span style="color:#303030;">,</span><span style="color:#8a8a20;">0</span></div><div class="r" style="left:11px;top:152.70px;color:#8a8a8a">0050BE59</div><div class="r" style="left:57px;top:152.70px;color:#303030"> <b>.</b>  C683 97000000 00</div><div class="r" style="left:157.2px;top:152.70px"><span style="color:#303030;">MOV</span> <span style="color:#1a1a98;">BYTE PTR DS:[EBX+97]</span><span style="color:#303030;">,</span><span style="color:#8a8a20;">0</span></div><div class="r" style="left:11px;top:159.90px;color:#8a8a8a">0050BE60</div><div class="r" style="left:57px;top:159.90px;color:#303030"> <b>.</b>  C683 2E010000 00</div><div class="r" style="left:157.2px;top:159.90px"><span style="color:#303030;">MOV</span> <span style="color:#1a1a98;">BYTE PTR DS:[EBX+12E]</span><span style="color:#303030;">,</span><span style="color:#8a8a20;">0</span></div><div class="r" style="left:11px;top:167.10px;color:#8a8a8a">0050BE67</div><div class="r" style="left:57px;top:167.10px;color:#303030"> <b>.</b>  C683 C5010000 00</div><div class="r" style="left:157.2px;top:167.10px"><span style="color:#303030;">MOV</span> <span style="color:#1a1a98;">BYTE PTR DS:[EBX+1C5]</span><span style="color:#303030;">,</span><span style="color:#8a8a20;">0</span></div><div class="r" style="left:11px;top:174.30px;color:#8a8a8a">0050BE6E</div><div class="r" style="left:57px;top:174.30px;color:#303030"> <b>.</b>  C683 5C020000 00</div><div class="r" style="left:157.2px;top:174.30px"><span style="color:#303030;">MOV</span> <span style="color:#1a1a98;">BYTE PTR DS:[EBX+25C]</span><span style="color:#303030;">,</span><span style="color:#8a8a20;">0</span></div><div class="r" style="left:11px;top:181.50px;color:#8a8a8a">0050BE75</div><div class="r" style="left:57px;top:181.50px;color:#303030"> <b>.</b>  C683 F3020000 00</div><div class="r" style="left:157.2px;top:181.50px"><span style="color:#303030;">MOV</span> <span style="color:#1a1a98;">BYTE PTR DS:[EBX+2F3]</span><span style="color:#303030;">,</span><span style="color:#8a8a20;">0</span></div><div class="r" style="left:11px;top:188.70px;color:#8a8a8a">0050BE7C</div><div class="r" style="left:57px;top:188.70px;color:#303030"> <b>.</b>  C683 8A030000 00</div><div class="r" style="left:157.2px;top:188.70px"><span style="color:#303030;">MOV</span> <span style="color:#1a1a98;">BYTE PTR DS:[EBX+38A]</span><span style="color:#303030;">,</span><span style="color:#8a8a20;">0</span></div><div class="r" style="left:11px;top:195.90px;color:#8a8a8a">0050BE83</div><div class="r" style="left:57px;top:195.90px;color:#303030"> <b>.</b>  C683 21040000 00</div><div class="r" style="left:157.2px;top:195.90px"><span style="color:#303030;">MOV</span> <span style="color:#1a1a98;">BYTE PTR DS:[EBX+421]</span><span style="color:#303030;">,</span><span style="color:#8a8a20;">0</span></div><div class="r" style="left:11px;top:203.10px;color:#8a8a8a">0050BE8A</div><div class="r" style="left:57px;top:203.10px;color:#303030"> <b>.</b>  8B06</div><div class="r" style="left:157.2px;top:203.10px"><span style="color:#303030;">MOV</span> <span style="color:#303030;">EAX</span><span style="color:#303030;">,</span><span style="color:#1a1a98;">DWORD PTR DS:[ESI]</span></div><div class="r" style="left:11px;top:210.30px;color:#8a8a8a">0050BE8C</div><div class="r" style="left:57px;top:210.30px;color:#303030"> <b>.</b>  E8 4397F8FF</div><div class="r" style="left:157.2px;top:210.30px"><span style="color:#000;">CALL</span> <span style="color:#000;">ImageRed.004955D4</span></div><div class="r" style="left:11px;top:217.50px;color:#8a8a8a">0050BE91</div><div class="r" style="left:57px;top:217.50px;color:#303030"> <b>.</b>  8B06</div><div class="r" style="left:157.2px;top:217.50px"><span style="color:#303030;">MOV</span> <span style="color:#303030;">EAX</span><span style="color:#303030;">,</span><span style="color:#1a1a98;">DWORD PTR DS:[ESI]</span></div><div class="r" style="left:11px;top:224.70px;color:#8a8a8a">0050BE93</div><div class="r" style="left:57px;top:224.70px;color:#303030"> <b>.</b>  BA 14BF5000</div><div class="r" style="left:157.2px;top:224.70px"><span style="color:#303030;">MOV</span> <span style="color:#303030;">EDX</span><span style="color:#303030;">,</span><span style="color:#000;">ImageRed.0050BF14</span></div><div class="r" style="left:355px;top:224.70px;color:#111">ASCII "TouchWARE ImageReducer"</div><div class="r" style="left:11px;top:231.90px;color:#8a8a8a">0050BE98</div><div class="r" style="left:57px;top:231.90px;color:#303030"> <b>.</b>  E8 DB91F8FF</div><div class="r" style="left:157.2px;top:231.90px"><span style="color:#000;">CALL</span> <span style="color:#000;">ImageRed.00495078</span></div><div class="r" style="left:11px;top:239.10px;color:#8a8a8a">0050BE9D</div><div class="r" style="left:57px;top:239.10px;color:#303030"> <b>.</b>  8B0D 24F15000</div><div class="r" style="left:157.2px;top:239.10px"><span style="color:#303030;">MOV</span> <span style="color:#303030;">ECX</span><span style="color:#303030;">,</span><span style="color:#1a1a98;">DWORD PTR DS:[50F124]</span></div><div class="r" style="left:355px;top:239.10px;color:#111">ImageRed.00536DDC</div><div class="r" style="left:11px;top:246.30px;color:#8a8a8a">0050BEA3</div><div class="r" style="left:57px;top:246.30px;color:#303030"> <b>.</b>  8B06</div><div class="r" style="left:157.2px;top:246.30px"><span style="color:#303030;">MOV</span> <span style="color:#303030;">EAX</span><span style="color:#303030;">,</span><span style="color:#1a1a98;">DWORD PTR DS:[ESI]</span></div><div class="r" style="left:11px;top:253.50px;color:#8a8a8a">0050BEA5</div><div class="r" style="left:57px;top:253.50px;color:#303030"> <b>.</b>  8B15 584F5000</div><div class="r" style="left:157.2px;top:253.50px"><span style="color:#303030;">MOV</span> <span style="color:#303030;">EDX</span><span style="color:#303030;">,</span><span style="color:#1a1a98;">DWORD PTR DS:[504F58]</span></div><div class="r" style="left:355px;top:253.50px;color:#111">ImageRed.00504FA4</div><div class="r" style="left:11px;top:260.70px;color:#8a8a8a">0050BEAB</div><div class="r" style="left:57px;top:260.70px;color:#303030"> <b>.</b>  E8 4497F8FF</div><div class="r" style="left:157.2px;top:260.70px"><span style="color:#000;">CALL</span> <span style="color:#000;">ImageRed.004955F4</span></div><div class="r" style="left:11px;top:267.90px;color:#8a8a8a">0050BEB0</div><div class="r" style="left:57px;top:267.90px;color:#303030"> <b>.</b>  8B0D 98F25000</div><div class="r" style="left:157.2px;top:267.90px"><span style="color:#303030;">MOV</span> <span style="color:#303030;">ECX</span><span style="color:#303030;">,</span><span style="color:#1a1a98;">DWORD PTR DS:[50F298]</span></div><div class="r" style="left:355px;top:267.90px;color:#111">ImageRed.00536DCC</div><div class="r" style="left:11px;top:275.10px;color:#8a8a8a">0050BEB6</div><div class="r" style="left:57px;top:275.10px;color:#303030"> <b>.</b>  8B06</div><div class="r" style="left:157.2px;top:275.10px"><span style="color:#303030;">MOV</span> <span style="color:#303030;">EAX</span><span style="color:#303030;">,</span><span style="color:#1a1a98;">DWORD PTR DS:[ESI]</span></div><div class="r" style="left:11px;top:282.30px;color:#8a8a8a">0050BEB8</div><div class="r" style="left:57px;top:282.30px;color:#303030"> <b>.</b>  8B15 24225000</div><div class="r" style="left:157.2px;top:282.30px"><span style="color:#303030;">MOV</span> <span style="color:#303030;">EDX</span><span style="color:#303030;">,</span><span style="color:#1a1a98;">DWORD PTR DS:[502224]</span></div><div class="r" style="left:355px;top:282.30px;color:#111">ImageRed.00502270</div><div class="r" style="left:11px;top:289.50px;color:#8a8a8a">0050BEBE</div><div class="r" style="left:57px;top:289.50px;color:#303030"> <b>.</b>  E8 3197F8FF</div><div class="r" style="left:157.2px;top:289.50px"><span style="color:#000;">CALL</span> <span style="color:#000;">ImageRed.004955F4</span></div><div class="r" style="left:11px;top:296.70px;color:#8a8a8a">0050BEC3</div><div class="r" style="left:57px;top:296.70px;color:#303030"> <b>.</b>  8B0D 74F45000</div><div class="r" style="left:157.2px;top:296.70px"><span style="color:#303030;">MOV</span> <span style="color:#303030;">ECX</span><span style="color:#303030;">,</span><span style="color:#1a1a98;">DWORD PTR DS:[50F474]</span></div><div class="r" style="left:355px;top:296.70px;color:#111">ImageRed.00535A60</div><div class="r" style="left:11px;top:303.90px;color:#8a8a8a">0050BEC9</div><div class="r" style="left:57px;top:303.90px;color:#303030"> <b>.</b>  8B06</div><div class="r" style="left:157.2px;top:303.90px"><span style="color:#303030;">MOV</span> <span style="color:#303030;">EAX</span><span style="color:#303030;">,</span><span style="color:#1a1a98;">DWORD PTR DS:[ESI]</span></div><div class="r" style="left:11px;top:311.10px;color:#8a8a8a">0050BECB</div><div class="r" style="left:57px;top:311.10px;color:#303030"> <b>.</b>  8B15 20374A00</div><div class="r" style="left:157.2px;top:311.10px"><span style="color:#303030;">MOV</span> <span style="color:#303030;">EDX</span><span style="color:#303030;">,</span><span style="color:#1a1a98;">DWORD PTR DS:[4A3720]</span></div><div class="r" style="left:355px;top:311.10px;color:#111">ImageRed.004A376C</div><div class="r" style="left:11px;top:318.30px;color:#8a8a8a">0050BED1</div><div class="r" style="left:57px;top:318.30px;color:#303030"> <b>.</b>  E8 1E97F8FF</div><div class="r" style="left:157.2px;top:318.30px"><span style="color:#000;">CALL</span> <span style="color:#000;">ImageRed.004955F4</span></div><div class="r" style="left:11px;top:325.50px;color:#8a8a8a">0050BED6</div><div class="r" style="left:57px;top:325.50px;color:#303030"> <b>.</b>  8B0D C8F45000</div><div class="r" style="left:157.2px;top:325.50px"><span style="color:#303030;">MOV</span> <span style="color:#303030;">ECX</span><span style="color:#303030;">,</span><span style="color:#1a1a98;">DWORD PTR DS:[50F4C8]</span></div><div class="r" style="left:355px;top:325.50px;color:#111">ImageRed.00536DD4</div><div class="r" style="left:11px;top:332.70px;color:#8a8a8a">0050BEDC</div><div class="r" style="left:57px;top:332.70px;color:#303030"> <b>.</b>  8B06</div><div class="r" style="left:157.2px;top:332.70px"><span style="color:#303030;">MOV</span> <span style="color:#303030;">EAX</span><span style="color:#303030;">,</span><span style="color:#1a1a98;">DWORD PTR DS:[ESI]</span></div><div class="r" style="left:11px;top:339.90px;color:#8a8a8a">0050BEDE</div><div class="r" style="left:57px;top:339.90px;color:#303030"> <b>.</b>  8B15 D4245000</div><div class="r" style="left:157.2px;top:339.90px"><span style="color:#303030;">MOV</span> <span style="color:#303030;">EDX</span><span style="color:#303030;">,</span><span style="color:#1a1a98;">DWORD PTR DS:[5024D4]</span></div><div class="r" style="left:355px;top:339.90px;color:#111">ImageRed.00502520</div><div class="r" style="left:11px;top:347.10px;color:#8a8a8a">0050BEE4</div><div class="r" style="left:57px;top:347.10px;color:#303030"> <b>.</b>  E8 0B97F8FF</div><div class="r" style="left:157.2px;top:347.10px"><span style="color:#000;">CALL</span> <span style="color:#000;">ImageRed.004955F4</span></div><div class="r" style="left:11px;top:354.30px;color:#8a8a8a">0050BEE9</div><div class="r" style="left:57px;top:354.30px;color:#303030"> <b>.</b>  8B0D 58F15000</div><div class="r" style="left:157.2px;top:354.30px"><span style="color:#303030;">MOV</span> <span style="color:#303030;">ECX</span><span style="color:#303030;">,</span><span style="color:#1a1a98;">DWORD PTR DS:[50F158]</span></div><div class="r" style="left:355px;top:354.30px;color:#111">ImageRed.00535A9C</div><div class="r" style="left:11px;top:361.50px;color:#8a8a8a">0050BEEF</div><div class="r" style="left:57px;top:361.50px;color:#303030"> <b>.</b>  8B06</div><div class="r" style="left:157.2px;top:361.50px"><span style="color:#303030;">MOV</span> <span style="color:#303030;">EAX</span><span style="color:#303030;">,</span><span style="color:#1a1a98;">DWORD PTR DS:[ESI]</span></div><div class="r" style="left:11px;top:368.70px;color:#8a8a8a">0050BEF1</div><div class="r" style="left:57px;top:368.70px;color:#303030"> <b>.</b>  8B15 70A84A00</div><div class="r" style="left:157.2px;top:368.70px"><span style="color:#303030;">MOV</span> <span style="color:#303030;">EDX</span><span style="color:#303030;">,</span><span style="color:#1a1a98;">DWORD PTR DS:[4AA870]</span></div><div class="r" style="left:355px;top:368.70px;color:#111">ImageRed.004AA8BC</div><div class="r" style="left:11px;top:375.90px;color:#8a8a8a">0050BEF7</div><div class="r" style="left:57px;top:375.90px;color:#303030"> <b>.</b>  E8 F896F8FF</div><div class="r" style="left:157.2px;top:375.90px"><span style="color:#000;">CALL</span> <span style="color:#000;">ImageRed.004955F4</span></div><div class="r" style="left:11px;top:383.10px;color:#8a8a8a">0050BEFC</div><div class="r" style="left:57px;top:383.10px;color:#303030"> <b>.</b>  8B06</div><div class="r" style="left:157.2px;top:383.10px"><span style="color:#303030;">MOV</span> <span style="color:#303030;">EAX</span><span style="color:#303030;">,</span><span style="color:#1a1a98;">DWORD PTR DS:[ESI]</span></div><div class="r" style="left:11px;top:390.30px;color:#8a8a8a">0050BEFE</div><div class="r" style="left:57px;top:390.30px;color:#303030"> <b>.</b>  E8 8597F8FF</div><div class="r" style="left:157.2px;top:390.30px"><span style="color:#000;">CALL</span> <span style="color:#000;">ImageRed.00495688</span></div><div class="r" style="left:11px;top:397.50px;color:#8a8a8a">0050BF03</div><div class="r" style="left:57px;top:397.50px;color:#303030"> <b>.</b>  5F</div><div class="r" style="left:157.2px;top:397.50px"><span style="color:#1010ff;">POP</span> <span style="color:#303030;">ESI</span></div><div class="r" style="left:355px;top:397.50px;color:#111">kernel32.7C817077</div></div>
<div style="position:absolute;left:550px;top:80.7px;width:13px;height:322.3px;background:linear-gradient(90deg,#f3f1ec 0%,#fefefb 40%,#f0efe8 100%);overflow:hidden"><div style="left:0.5px;top:0.5px;width:12px;height:12.5px;background:linear-gradient(135deg,#dfe8fd 0%,#c7d6fb 50%,#b7caf7 100%);border:1px solid #d2ddfb;border-radius:2px"><svg style="position:absolute;left:0;top:0" width="12" height="12.5"><path d="M2.8 8.1L6.0 4.8L9.2 8.1" stroke="#4d6185" stroke-width="1.7" fill="none"/></svg></div><div style="left:0.5px;top:309.3px;width:12px;height:12.5px;background:linear-gradient(135deg,#dfe8fd 0%,#c7d6fb 50%,#b7caf7 100%);border:1px solid #d2ddfb;border-radius:2px"><svg style="position:absolute;left:0;top:0" width="12" height="12.5"><path d="M2.8 4.5L6.0 7.7L9.2 4.5" stroke="#4d6185" stroke-width="1.7" fill="none"/></svg></div><div style="left:0.5px;top:296px;width:12px;height:11px;background:linear-gradient(90deg,#c9d8fc,#bccffb 60%,#b0c4f5);border:1px solid #b6c8f2;border-radius:2px"><div style="left:3.0px;top:2.5px;width:5px;height:6px;border-top:1px solid #eef3fe;border-bottom:1px solid #eef3fe;"><div style="left:0;top:1.5px;width:5px;height:1px;background:#eef3fe"></div></div></div></div>
<div style="position:absolute;left:8px;top:403px;width:542px;height:13.5px;background:linear-gradient(#f3f1ec 0%,#fefefb 40%,#f0efe8 100%);overflow:hidden"><div style="left:0.5px;top:0.5px;width:12.5px;height:12.5px;background:linear-gradient(135deg,#dfe8fd 0%,#c7d6fb 50%,#b7caf7 100%);border:1px solid #d2ddfb;border-radius:2px"><svg style="position:absolute;left:0;top:0" width="12.5" height="12.5"><path d="M7.8 3.0L4.7 6.2L7.8 9.4" stroke="#4d6185" stroke-width="1.7" fill="none"/></svg></div><div style="left:529.0px;top:0.5px;width:12.5px;height:12.5px;background:linear-gradient(135deg,#dfe8fd 0%,#c7d6fb 50%,#b7caf7 100%);border:1px solid #d2ddfb;border-radius:2px"><svg style="position:absolute;left:0;top:0" width="12.5" height="12.5"><path d="M4.7 3.0L7.8 6.2L4.7 9.4" stroke="#4d6185" stroke-width="1.7" fill="none"/></svg></div><div style="left:13.5px;top:0.5px;width:13px;height:12.5px;background:linear-gradient(#c9d8fc,#bccffb 60%,#b0c4f5);border:1px solid #b6c8f2;border-radius:2px"></div></div>
<div style="position:absolute;left:550px;top:403px;width:13px;height:13.5px;background:#ece9d8"></div>
<div style="position:absolute;left:7px;top:416.3px;width:558px;height:1.7px;background:#000"></div>
<div style="position:absolute;left:563px;top:79px;width:2px;height:339px;background:#000"></div>
<div style="position:absolute;left:563.5px;top:418px;width:1px;height:29px;background:#8a8a8a"></div>
<div style="position:absolute;left:8px;top:418px;width:555px;height:29px;background:#fffbf0"></div>
<div class="t" style="left:11px;top:419.2px;color:#222;">EBP=0012FFF0</div>
<div style="position:absolute;left:565px;top:81px;width:241px;height:366px;background:#fffbf0"></div>
<div style="position:absolute;left:565px;top:80px;width:241px;height:11px;background:#c0c0c0;border-top:1px solid #e8e8e8;border-left:1px solid #f4f4f4;border-bottom:1px solid #111"></div>
<div class="t" style="left:568px;top:82px;color:#111;">Registers (FPU)</div>
<svg style="position:absolute;left:755px;top:81px" width="40" height="10"><path d="M8 1.8L5 4.8L8 7.8M32 1.8L29 4.8L32 7.8" stroke="#404040" stroke-width="1.1" fill="none"/></svg>
<div style="position:absolute;left:565px;top:79px;width:241px;height:1px;background:#8a8a8a"></div>
<div class="r" style="left:568px;top:91.40px"><span style="color:#8a8a8a;">EAX </span><b><span style="color:#ff1010;">00000000</span></b></div>
<div class="r" style="left:568px;top:98.60px"><span style="color:#8a8a8a;">ECX </span><b><span style="color:#ff1010;">0012FFB0</span></b></div>
<div class="r" style="left:568px;top:105.80px"><span style="color:#8a8a8a;">EDX </span><b><span style="color:#ff1010;">7C90E514</span></b><span style="color:#8a8a8a;"> ntdll.KiFastSystemCallRet</span></div>
<div class="r" style="left:568px;top:113.00px"><span style="color:#8a8a8a;">EBX 7FFD7000</span></div>
<div class="r" style="left:568px;top:120.20px"><span style="color:#8a8a8a;">ESP </span><b><span style="color:#ff1010;">0012FFC4</span></b></div>
<div class="r" style="left:568px;top:127.40px"><span style="color:#8a8a8a;">EBP </span><b><span style="color:#ff1010;">0012FFF0</span></b></div>
<div class="r" style="left:568px;top:134.60px"><span style="color:#8a8a8a;">ESI FFFFFFFF</span></div>
<div class="r" style="left:568px;top:141.80px"><span style="color:#8a8a8a;">EDI 7C910228 ntdll.7C910228</span></div>
<div class="r" style="left:568px;top:152.60px"><span style="color:#8a8a8a;">EIP </span><b><span style="color:#ff1010;">0050BE38</span></b><span style="color:#8a8a8a;"> ImageRed.&lt;ModuleEntryPoint&gt;</span></div>
<div class="r" style="left:568px;top:162.50px"><span style="color:#8a8a8a;">C 0  ES 0023 32bit 0(FFFFFFFF)</span></div>
<div class="r" style="left:568px;top:169.70px"><span style="color:#8a8a8a;">P </span><b><span style="color:#ff1010;">1</span></b><span style="color:#8a8a8a;">  CS 001B 32bit 0(FFFFFFFF)</span></div>
<div class="r" style="left:568px;top:176.90px"><span style="color:#8a8a8a;">A 0  SS 0023 32bit 0(FFFFFFFF)</span></div>
<div class="r" style="left:568px;top:184.10px"><span style="color:#8a8a8a;">Z </span><b><span style="color:#ff1010;">1</span></b><span style="color:#8a8a8a;">  DS 0023 32bit 0(FFFFFFFF)</span></div>
<div class="r" style="left:568px;top:191.30px"><span style="color:#8a8a8a;">S 0  FS </span><b><span style="color:#ff1010;">003B</span></b><span style="color:#8a8a8a;"> 32bit 7FFDF000(FFF)</span></div>
<div class="r" style="left:568px;top:198.50px"><span style="color:#8a8a8a;">T 0  GS 0000 NULL</span></div>
<div class="r" style="left:568px;top:205.70px"><span style="color:#8a8a8a;">D 0</span></div>
<div class="r" style="left:568px;top:212.90px"><span style="color:#8a8a8a;">O 0  LastErr ERROR_SUCCESS (00000000)</span></div>
<div class="r" style="left:568px;top:223.60px"><span style="color:#8a8a8a;">EFL </span><b><span style="color:#ff1010;">00000246</span></b><span style="color:#8a8a8a;"> (NO,NB,E,BE,NS,PE,GE,LE)</span></div>
<div class="r" style="left:568px;top:235.30px"><span style="color:#8a8a8a;">ST0 empty -UNORM B938 01050104 00000000</span></div>
<div class="r" style="left:568px;top:242.50px"><span style="color:#8a8a8a;">ST1 empty 0.0</span></div>
<div class="r" style="left:568px;top:249.70px"><span style="color:#8a8a8a;">ST2 empty 0.0</span></div>
<div class="r" style="left:568px;top:256.90px"><span style="color:#8a8a8a;">ST3 empty 0.0</span></div>
<div class="r" style="left:568px;top:264.10px"><span style="color:#8a8a8a;">ST4 empty 0.0</span></div>
<div class="r" style="left:568px;top:271.30px"><span style="color:#8a8a8a;">ST5 empty 0.0</span></div>
<div class="r" style="left:568px;top:278.50px"><span style="color:#8a8a8a;">ST6 empty </span><b><span style="color:#ff1010;">1.0000000000000000000</span></b></div>
<div class="r" style="left:568px;top:285.70px"><span style="color:#8a8a8a;">ST7 empty </span><b><span style="color:#ff1010;">1.0000000000000000000</span></b></div>
<div class="r" style="left:568px;top:292.90px"><span style="color:#8a8a8a;">               3 2 1 0      E S P U O Z D I</span></div>
<div class="r" style="left:568px;top:300.10px"><span style="color:#8a8a8a;">FST </span><b><span style="color:#ff1010;">4020</span></b><span style="color:#8a8a8a;">  Cond </span><b><span style="color:#ff1010;">1</span></b><span style="color:#8a8a8a;"> 0 0 0  Err 0 0 </span><b><span style="color:#ff1010;">1</span></b><span style="color:#8a8a8a;"> 0 0 0 0 0  (EQ)</span></div>
<div class="r" style="left:568px;top:307.30px"><span style="color:#8a8a8a;">FCW 027F  Prec NEAR,53  Mask    1 1 1 1 1 1</span></div>
<div style="position:absolute;left:7px;top:446.5px;width:799px;height:1.2px;background:#7a7a7a"></div>
<div style="position:absolute;left:8px;top:447.7px;width:401px;height:132px;background:#fffbf0"></div>
<div style="position:absolute;left:8px;top:447.7px;width:387px;height:11px;background:#c0c0c0;border-bottom:1px solid #111;border-top:1px solid #f4f4f4"></div>
<div style="position:absolute;left:50.4px;top:448px;width:1px;height:10px;background:#555"></div>
<div style="position:absolute;left:51.4px;top:448px;width:1px;height:10px;background:#f4f4f4"></div>
<div style="position:absolute;left:281.5px;top:448px;width:1px;height:10px;background:#555"></div>
<div style="position:absolute;left:282.5px;top:448px;width:1px;height:10px;background:#f4f4f4"></div>
<div style="position:absolute;left:362.4px;top:448px;width:1px;height:10px;background:#555"></div>
<div style="position:absolute;left:363.4px;top:448px;width:1px;height:10px;background:#f4f4f4"></div>
<div class="t" style="left:11px;top:449.5px;color:#111;">Address</div>
<div class="t" style="left:53.7px;top:449.5px;color:#111;">Hex dump</div>
<div class="t" style="left:284.5px;top:449.5px;color:#111;">ASCII</div>
<div style="position:absolute;left:49.9px;top:459px;width:1.5px;height:121px;background:#c4c4c4"></div>
<div style="position:absolute;left:107.7px;top:459px;width:1.5px;height:121px;background:#c4c4c4"></div>
<div style="position:absolute;left:165.3px;top:459px;width:1.5px;height:121px;background:#c4c4c4"></div>
<div style="position:absolute;left:222.9px;top:459px;width:1.5px;height:121px;background:#c4c4c4"></div>
<div style="position:absolute;left:281px;top:459px;width:1.5px;height:121px;background:#c4c4c4"></div>
<div style="position:absolute;left:361.9px;top:459px;width:1.5px;height:121px;background:#c4c4c4"></div>
<div style="left:0;top:0;width:1024px;height:579px;overflow:hidden;clip-path:inset(459px 615px 0 8px)"><div class="r" style="left:11px;top:458.80px;color:#8a8a8a">0050C000</div><div class="r" style="left:53.7px;top:458.80px;color:#8a8a8a">00 00 00 00 00 00 00 00 02 8D 40 00 00 00 00 00</div><div class="r" style="left:285px;top:458.80px;color:#8a8a8a">........☻ì@.....</div><div class="r" style="left:11px;top:466.00px;color:#8a8a8a">0050C010</div><div class="r" style="left:53.7px;top:466.00px;color:#8a8a8a">00 00 00 00 00 00 00 00 00 00 00 00 00 00 00 00</div><div class="r" style="left:285px;top:466.00px;color:#8a8a8a">................</div><div class="r" style="left:11px;top:473.20px;color:#8a8a8a">0050C020</div><div class="r" style="left:53.7px;top:473.20px;color:#8a8a8a">32 13 8B C0 02 00 8B C0 00 8D 40 00 00 8D 40 00</div><div class="r" style="left:285px;top:473.20px;color:#8a8a8a">2‼ï└☻.ï└.ì@..ì@.</div><div class="r" style="left:11px;top:480.40px;color:#8a8a8a">0050C030</div><div class="r" style="left:53.7px;top:480.40px;color:#8a8a8a">00 8D 40 00 01 8D 40 00 00 00 00 00 00 00 00 00</div><div class="r" style="left:285px;top:480.40px;color:#8a8a8a">.ì@.☺ì@.........</div><div class="r" style="left:11px;top:487.60px;color:#8a8a8a">0050C040</div><div class="r" style="left:53.7px;top:487.60px;color:#8a8a8a">CC 24 40 00 78 26 40 00 54 2A 40 00 00 CB CC C8</div><div class="r" style="left:285px;top:487.60px;color:#8a8a8a">╠$@.x&amp;@.T*@..╦╠╚</div><div class="r" style="left:11px;top:494.80px;color:#8a8a8a">0050C050</div><div class="r" style="left:53.7px;top:494.80px;color:#8a8a8a">C9 D7 CF C8 CD CE DB D8 DA D9 CA DC DD DE DF E0</div><div class="r" style="left:285px;top:494.80px;color:#8a8a8a">╔╫╧╚═╬█╪┌┘╩▄▌▐▀α</div><div class="r" style="left:11px;top:502.00px;color:#8a8a8a">0050C060</div><div class="r" style="left:53.7px;top:502.00px;color:#8a8a8a">E1 E3 00 E4 E5 8D 40 00 45 72 72 6F 72 00 8B C0</div><div class="r" style="left:285px;top:502.00px;color:#8a8a8a">ßπ.Σσì@.Error.ï└</div><div class="r" style="left:11px;top:509.20px;color:#8a8a8a">0050C070</div><div class="r" style="left:53.7px;top:509.20px;color:#8a8a8a">52 75 6E 74 69 6D 65 20 65 72 72 6F 72 20 20 20</div><div class="r" style="left:285px;top:509.20px;color:#8a8a8a">Runtime error   </div><div class="r" style="left:11px;top:516.40px;color:#8a8a8a">0050C080</div><div class="r" style="left:53.7px;top:516.40px;color:#8a8a8a">20 20 61 74 20 30 30 30 30 30 30 30 30 00 8B C0</div><div class="r" style="left:285px;top:516.40px;color:#8a8a8a">  at 00000000.ï└</div><div class="r" style="left:11px;top:523.60px;color:#8a8a8a">0050C090</div><div class="r" style="left:53.7px;top:523.60px;color:#8a8a8a">30 31 32 33 34 35 36 37 38 39 41 42 43 44 45 46</div><div class="r" style="left:285px;top:523.60px;color:#8a8a8a">0123456789ABCDEF</div><div class="r" style="left:11px;top:530.80px;color:#8a8a8a">0050C0A0</div><div class="r" style="left:53.7px;top:530.80px;color:#8a8a8a">00 00 00 00 00 00 00 00 00 00 00 00 00 00 00 00</div><div class="r" style="left:285px;top:530.80px;color:#8a8a8a">................</div><div class="r" style="left:11px;top:538.00px;color:#8a8a8a">0050C0B0</div><div class="r" style="left:53.7px;top:538.00px;color:#8a8a8a">00 00 00 00 00 00 00 00 00 00 00 00 00 00 00 00</div><div class="r" style="left:285px;top:538.00px;color:#8a8a8a">................</div><div class="r" style="left:11px;top:545.20px;color:#8a8a8a">0050C0C0</div><div class="r" style="left:53.7px;top:545.20px;color:#8a8a8a">00 00 00 00 00 00 00 00 00 00 00 00 00 00 00 00</div><div class="r" style="left:285px;top:545.20px;color:#8a8a8a">................</div><div class="r" style="left:11px;top:552.40px;color:#8a8a8a">0050C0D0</div><div class="r" style="left:53.7px;top:552.40px;color:#8a8a8a">00 00 00 00 00 00 00 00 00 00 00 00 32 00 8B C0</div><div class="r" style="left:285px;top:552.40px;color:#8a8a8a">............2.ï└</div><div class="r" style="left:11px;top:559.60px;color:#8a8a8a">0050C0E0</div><div class="r" style="left:53.7px;top:559.60px;color:#8a8a8a">1F 00 1C 00 1F 00 1E 00 1F 00 1E 00 1F 00 1F 00</div><div class="r" style="left:285px;top:559.60px;color:#8a8a8a">▼.∟.▼.▲.▼.▲.▼.▼.</div><div class="r" style="left:11px;top:566.80px;color:#8a8a8a">0050C0F0</div><div class="r" style="left:53.7px;top:566.80px;color:#8a8a8a">1E 00 1F 00 1E 00 1F 00 1F 00 1D 00 1F 00 1E 00</div><div class="r" style="left:285px;top:566.80px;color:#8a8a8a">▲.▼.▲.▼.▼.↔.▼.▲.</div><div class="r" style="left:11px;top:574.00px;color:#8a8a8a">0050C100</div><div class="r" style="left:53.7px;top:574.00px;color:#8a8a8a">1F 00 1F 00 1F 00 1E 00 1F 00 1E 00 1F 00 1F 00</div><div class="r" style="left:285px;top:574.00px;color:#8a8a8a">▼.▼.▼.▲.▼.▲.▼.▼.</div></div>
<div style="position:absolute;left:395px;top:448.3px;width:13px;height:131px;background:linear-gradient(90deg,#f3f1ec 0%,#fefefb 40%,#f0efe8 100%);overflow:hidden"><div style="left:0.5px;top:0.5px;width:12px;height:12.5px;background:linear-gradient(135deg,#dfe8fd 0%,#c7d6fb 50%,#b7caf7 100%);border:1px solid #d2ddfb;border-radius:2px"><svg style="position:absolute;left:0;top:0" width="12" height="12.5"><path d="M2.8 8.1L6.0 4.8L9.2 8.1" stroke="#4d6185" stroke-width="1.7" fill="none"/></svg></div><div style="left:0.5px;top:13.5px;width:12px;height:13px;background:linear-gradient(90deg,#c9d8fc,#bccffb 60%,#b0c4f5);border:1px solid #b6c8f2;border-radius:2px"><div style="left:3.0px;top:3.5px;width:5px;height:6px;border-top:1px solid #eef3fe;border-bottom:1px solid #eef3fe;"><div style="left:0;top:1.5px;width:5px;height:1px;background:#eef3fe"></div></div></div></div>
<div style="position:absolute;left:408px;top:447.7px;width:1.5px;height:132px;background:#404040"></div>
<div style="position:absolute;left:409.5px;top:447.7px;width:396.5px;height:132px;background:#fffbf0"></div>
<div style="position:absolute;left:409.5px;top:447.9px;width:47.5px;height:7.2px;background:#000"></div>
<div style="position:absolute;left:457px;top:447.9px;width:335px;height:7.2px;background:#c0c0c0"></div>
<div style="position:absolute;left:457px;top:447.9px;width:1.6px;height:132px;background:#b8b8b8"></div>
<div style="position:absolute;left:504.8px;top:447.9px;width:1.6px;height:132px;background:#b8b8b8"></div>
<div style="left:0;top:0;width:1024px;height:579px;overflow:hidden;clip-path:inset(447px 232px 0 409px)"><div class="r" style="left:413px;top:447.90px;color:#e8e8e8">0012FFC4</div><div class="r" style="left:465.5px;top:447.90px;color:#8a8a8a">7C817077</div><div class="r" style="left:509.5px;top:447.90px;color:#8a8a8a">RETURN to kernel32.7C817077</div><div class="r" style="left:413px;top:455.10px;color:#8a8a8a">0012FFC8</div><div class="r" style="left:465.5px;top:455.10px;color:#8a8a8a">7C910228</div><div class="r" style="left:509.5px;top:455.10px;color:#8a8a8a">ntdll.7C910228</div><div class="r" style="left:413px;top:462.30px;color:#8a8a8a">0012FFCC</div><div class="r" style="left:465.5px;top:462.30px;color:#8a8a8a">FFFFFFFF</div><div class="r" style="left:413px;top:469.50px;color:#8a8a8a">0012FFD0</div><div class="r" style="left:465.5px;top:469.50px;color:#8a8a8a">7FFD7000</div><div class="r" style="left:413px;top:476.70px;color:#8a8a8a">0012FFD4</div><div class="r" style="left:465.5px;top:476.70px;color:#8a8a8a">8054B6ED</div><div class="r" style="left:413px;top:483.90px;color:#8a8a8a">0012FFD8</div><div class="r" style="left:465.5px;top:483.90px;color:#8a8a8a">0012FFC8</div><div class="r" style="left:413px;top:491.10px;color:#8a8a8a">0012FFDC</div><div class="r" style="left:465.5px;top:491.10px;color:#8a8a8a">853D1020</div><div class="r" style="left:413px;top:498.30px;color:#8a8a8a">0012FFE0</div><div class="r" style="left:465.5px;top:498.30px;color:#8a8a8a">FFFFFFFF</div><div class="r" style="left:509.5px;top:498.30px;color:#8a8a8a">End of SEH chain</div><div class="r" style="left:413px;top:505.50px;color:#8a8a8a">0012FFE4</div><div class="r" style="left:465.5px;top:505.50px;color:#8a8a8a">7C839AD8</div><div class="r" style="left:509.5px;top:505.50px;color:#8a8a8a">SE handler</div><div class="r" style="left:413px;top:512.70px;color:#8a8a8a">0012FFE8</div><div class="r" style="left:465.5px;top:512.70px;color:#8a8a8a">7C817080</div><div class="r" style="left:509.5px;top:512.70px;color:#8a8a8a">kernel32.7C817080</div><div class="r" style="left:413px;top:519.90px;color:#8a8a8a">0012FFEC</div><div class="r" style="left:465.5px;top:519.90px;color:#8a8a8a">00000000</div><div class="r" style="left:413px;top:527.10px;color:#8a8a8a">0012FFF0</div><div class="r" style="left:465.5px;top:527.10px;color:#8a8a8a">00000000</div><div class="r" style="left:413px;top:534.30px;color:#8a8a8a">0012FFF4</div><div class="r" style="left:465.5px;top:534.30px;color:#8a8a8a">00000000</div><div class="r" style="left:413px;top:541.50px;color:#8a8a8a">0012FFF8</div><div class="r" style="left:465.5px;top:541.50px;color:#8a8a8a">0050BE38</div><div class="r" style="left:509.5px;top:541.50px;color:#8a8a8a">ImageRed.&lt;ModuleEntryPoint&gt;</div><div class="r" style="left:413px;top:548.70px;color:#8a8a8a">0012FFFC</div><div class="r" style="left:465.5px;top:548.70px;color:#8a8a8a">00000000</div></div>
<div style="position:absolute;left:792px;top:448.6px;width:13px;height:131px;background:linear-gradient(90deg,#f3f1ec 0%,#fefefb 40%,#f0efe8 100%);overflow:hidden"><div style="left:0.5px;top:0.5px;width:12px;height:12.5px;background:linear-gradient(135deg,#dfe8fd 0%,#c7d6fb 50%,#b7caf7 100%);border:1px solid #d2ddfb;border-radius:2px"><svg style="position:absolute;left:0;top:0" width="12" height="12.5"><path d="M2.8 8.1L6.0 4.8L9.2 8.1" stroke="#4d6185" stroke-width="1.7" fill="none"/></svg></div></div>
<div style="position:absolute;left:805px;top:79px;width:1.5px;height:500px;background:#a09a88"></div>
<div style="position:absolute;left:7px;top:79px;width:1px;height:500px;background:#202020"></div>
<div style="position:absolute;left:0px;top:579px;width:1024px;height:21px;background:#ece9d8"></div>
<div style="position:absolute;left:0px;top:582px;width:203px;height:18px;background:#fff;border-top:1.5px solid #8a8870;border-left:2px solid #a8a8a8;border-right:1px solid #8a8870"><div style="left:187px;top:1px;width:13px;height:14.5px;background:#ece9d8;border-right:1px solid #777;border-bottom:1px solid #777;border-left:1px solid #fff;border-top:1px solid #fff"><svg style="position:absolute;left:0;top:0" width="12" height="14"><path d="M3 5.5h6l-3 3z" fill="#000"/></svg></div></div>
<div style="position:absolute;left:0px;top:600px;width:1024px;height:13px;background:#c0c0c0;border-top:1px solid #fff"></div>
<div style="position:absolute;left:0px;top:601px;width:1024px;height:1px;background:#8a8a8a"></div>
<div style="position:absolute;left:1.5px;top:601px;width:1px;height:12px;background:#8a8a8a"></div>
<div style="position:absolute;left:997px;top:601px;width:1px;height:12px;background:#8a8a8a"></div>
<div style="position:absolute;left:998px;top:601px;width:1px;height:12px;background:#fff"></div>
<div style="position:absolute;left:999px;top:601px;width:1px;height:12px;background:#8a8a8a"></div>
<div style="position:absolute;left:1022px;top:601px;width:1px;height:12px;background:#fff"></div>
<div style="left:4.9px;top:601.5px;font:9.4px 'Liberation Sans', sans-serif;color:#111;line-height:12px;white-space:pre;transform:scaleX(0.87);transform-origin:0 0">Program entry point</div>
<svg style="position:absolute;left:866px;top:570px" width="24" height="24" viewBox="866 570 24 24"><path d="M873 575.5 L873 587.5 L876 585 L878.5 589 L881 587.5 L879 583.8 L883 582 Z" fill="rgba(0,0,0,0.22)"/><path d="M871.5 573.3 L871.5 585.5 L874.4 582.9 L876.9 587 L879.3 585.6 L877.2 581.7 L881.3 579.8 Z" fill="#ededf0" stroke="#1a1a1a" stroke-width="0.9" stroke-linejoin="round"/></svg>
</body></html>
